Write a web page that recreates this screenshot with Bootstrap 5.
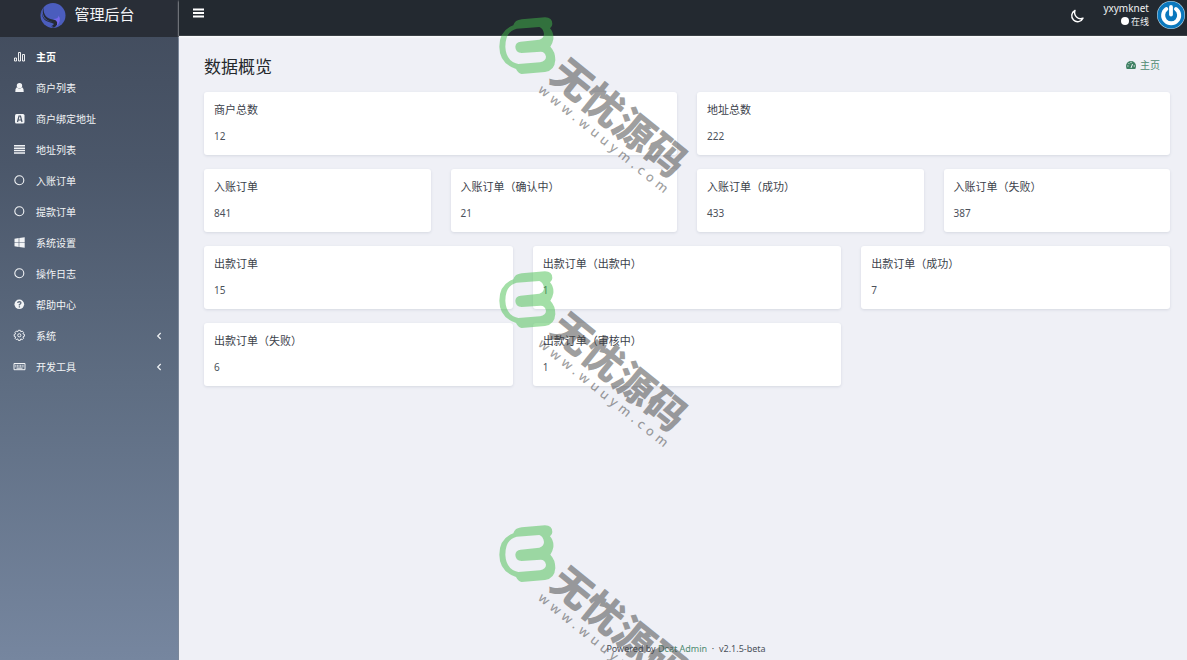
<!DOCTYPE html>
<html lang="zh-CN">
<head>
<meta charset="utf-8">
<meta name="viewport" content="width=device-width, initial-scale=1">
<title>管理后台</title>
<link href="https://cdn.jsdelivr.net/npm/bootstrap@5.3.0/dist/css/bootstrap.min.css" rel="stylesheet">
<style>
  body { font-family: "Noto Sans", "Noto Sans CJK SC", sans-serif; font-size: 10px; line-height: 16px; color: #4b515a; background: #eff0f6; }
  .side { width: 179px; background: linear-gradient(#414b5c, #4b576a 25%, #5e6d82 58%, #76869f); border-right: 1px solid #7b8799; }
  .brand { height: 37px; background: #292e37; color: #f4f5f7; font-size: 15px; line-height: 28px; margin-right: -1px; padding-right: 4px; }
  .brand svg { margin-top: 2px; }
  .menu { padding-top: 4px; }
  .menu a { height: 31px; padding: 0 16px 0 13px; gap: 10px; color: #f2f4f6; text-decoration: none; }
  .menu a.active { font-weight: 700; color: #fff; }
  .menu svg { width: 13px; height: 13px; flex: none; }
  .menu .arrow { width: 6px; height: 8px; }
  .topbar { height: 36px; background: #232930; color: #fff; box-shadow: 0 1px 2px #ffffff; border-bottom: 1px solid #3a4045; padding: 0 2px 6px 14px; }
  .topbar button { background: none; border: 0; padding: 0; color: #fff; line-height: 0; }
  .topbar .burger { padding-bottom: 4px; }
  .topbar .night { padding-top: 3px; margin-right: 14px; }
  .user { font-size: 10px; line-height: 13px; text-align: right; color: #f0f1f2; text-decoration: none; }
  .state { font-size: 9px; }
  .state i { width: 8px; height: 8px; background: #fff; margin-right: 2px; }
  .page-body { padding: 17px 17px 0 25px; }
  h1 { font-size: 17px; line-height: 27px; font-weight: 400; color: #24282c; margin: 0; }
  .crumb a, .foot a { color: #4e8a71; text-decoration: none; }
  .crumb { padding: 0 10px 4px 0; }
  .tiles { --bs-gutter-x: 20px; --bs-gutter-y: 14px; margin-top: -2px; }
  .tile { border: 0; border-radius: 3px; padding: 10px 10px 11px; box-shadow: 0 1px 3px rgba(50, 60, 90, .13); }
  .tile h2 { font-size: 11px; line-height: 16px; font-weight: 400; margin: 0 0 10px; color: #3c424b; }
  .tile p { margin: 0; }
  .foot { font-size: 9px; line-height: 14px; padding: 0 0 4px 6px; }
  .marks { inset: 0; overflow: hidden; pointer-events: none; z-index: 10; }
  .marks svg { width: 191px; height: 254px; flex: none; overflow: visible; }
  .m-name { font: 900 120px "Noto Sans CJK SC", sans-serif; }
  .m-site { font: 500 39px "Noto Sans", sans-serif; letter-spacing: 13px; }
</style>
</head>
<body>
<div class="d-flex min-vh-100 position-relative">
  <aside class="side flex-shrink-0">
    <div class="brand d-flex justify-content-center gap-2">
      <svg class="flex-shrink-0" width="26" height="26" viewBox="0 0 26 26"><circle cx="13" cy="13.500" r="12.500" fill="#4b5dbd"/><path d="M2.500 6C.5 13 4 18.500 11 19.500Q17 20 15.500 23Q14.500 24.500 11 24.500C17 21 12 21.500 9 20C3 18.500 .5 13 2.500 6Z" fill="#252a34"/><path d="M3.500 5C3 13 7 16.500 12.500 17.500C20 18.500 18.500 22 15 25Q14 25.500 12 25.500Q17 21 12.500 20C5 18.500 1 13 3.500 5Z" fill="#252a34"/><path d="M13 17Q18.500 17 18.500 13.500Q22.500 18.500 15.500 25.500Q20 19 13 17Z" fill="#7468ea"/></svg>
      <span>管理后台</span>
    </div>
    <nav class="menu d-flex flex-column">
      <a href="#" class="active d-flex align-items-center"><svg viewBox="0 0 13 13" fill="none" stroke="currentColor" stroke-width=".9"><path d="M1.500 11v-3h2v3zM5.500 11v-8.500h2V11zM9.500 11v-6.500h2V11z"/></svg>主页</a>
      <a href="#" class="d-flex align-items-center"><svg viewBox="0 0 13 13" fill="currentColor"><circle cx="6.500" cy="4.700" r="2.700"/><path d="M3.800 6.300Q6.500 9 9.200 6.300Q11 7.500 10.700 11H2.300Q2 7.500 3.800 6.300Z"/></svg>商户列表</a>
      <a href="#" class="d-flex align-items-center"><svg viewBox="0 0 13 13"><rect x="2" y="2" width="9.500" height="9.500" rx="1.500" fill="currentColor"/><path d="M4.500 10L6 4h1.500L9 10M5 8h3.500" fill="none" stroke="#4a5567" stroke-width="1.200"/></svg>商户绑定地址</a>
      <a href="#" class="d-flex align-items-center"><svg viewBox="0 0 13 13" stroke="currentColor" stroke-width="1.500"><path d="M1 2.800h11M1 5.200h11M1 7.600h11M1 10h11"/></svg>地址列表</a>
      <a href="#" class="d-flex align-items-center"><svg viewBox="0 0 13 13" fill="none" stroke="currentColor" stroke-width="1.100"><circle cx="6.300" cy="6.300" r="4.500"/></svg>入账订单</a>
      <a href="#" class="d-flex align-items-center"><svg viewBox="0 0 13 13" fill="none" stroke="currentColor" stroke-width="1.100"><circle cx="6.300" cy="6.300" r="4.500"/></svg>提款订单</a>
      <a href="#" class="d-flex align-items-center"><svg viewBox="0 0 13 13" fill="currentColor"><path d="M1.500 2.700L5.700 2.100V6.200H1.500ZM6.300 2L11.700 1.300V6.200H6.300ZM1.500 6.800H5.700V10.900L1.500 10.300ZM6.300 6.800H11.700V11.700L6.300 11Z"/></svg>系统设置</a>
      <a href="#" class="d-flex align-items-center"><svg viewBox="0 0 13 13" fill="none" stroke="currentColor" stroke-width="1.100"><circle cx="6.300" cy="6.300" r="4.500"/></svg>操作日志</a>
      <a href="#" class="d-flex align-items-center"><svg viewBox="0 0 13 13"><circle cx="6.300" cy="6.300" r="4.800" fill="currentColor"/><path d="M4.700 5Q4.800 3.600 6.300 3.600Q8 3.700 7.900 5Q7.800 5.900 6.400 6.500V7.500M6.400 8.200V9.400" fill="none" stroke="#5a687b" stroke-width="1.300"/></svg>帮助中心</a>
      <a href="#" class="d-flex align-items-center"><svg viewBox="0 0 13 13" fill="none" stroke="currentColor"><path d="M5.300 1.300h2l.5 1.400 1.500-.6 1.300 1.400-.7 1.300 1.500.6v1.900l-1.500.6.7 1.400-1.300 1.300-1.500-.7-.5 1.500h-2l-.5-1.500-1.500.7L2 9.300l.7-1.400-1.500-.6V5.400l1.500-.6L2 3.500l1.300-1.400 1.500.6z"/><circle cx="6.300" cy="6.300" r="1.600"/></svg>系统<svg class="arrow ms-auto" viewBox="0 0 6 8" fill="none" stroke="currentColor" stroke-width="1.200"><path d="M4.700 1L1.700 4L4.700 7"/></svg></a>
      <a href="#" class="d-flex align-items-center"><svg viewBox="0 0 13 13" fill="none" stroke="currentColor"><path d="M1 3.500h11v6.200H1z"/><path d="M2.300 5.300h8.500M2.300 6.800h8.500" stroke-dasharray="1 .6"/><path d="M3.500 8.200h6"/></svg>开发工具<svg class="arrow ms-auto" viewBox="0 0 6 8" fill="none" stroke="currentColor" stroke-width="1.200"><path d="M4.700 1L1.700 4L4.700 7"/></svg></a>
    </nav>
  </aside>

  <div class="flex-grow-1 d-flex flex-column">
    <header class="topbar d-flex align-items-center">
      <button type="button" class="burger" aria-label="菜单"><svg width="11" height="10" viewBox="0 0 11 10" stroke="currentColor" stroke-width="1.800"><path d="M0 1.500h11M0 5h11M0 8.500h11"/></svg></button>
      <button type="button" class="night ms-auto" aria-label="深色模式"><svg width="16" height="16" viewBox="0 0 16 16" fill="none" stroke="currentColor" stroke-width="1.400" stroke-linejoin="round"><path d="M6 2.500A5.900 5.900 0 1 0 14 10.200A6.100 6.100 0 0 1 6 2.500Z"/></svg></button>
      <a href="#" class="user d-flex align-items-center gap-2">
        <span class="ps-1"><span class="d-block">yxymknet</span><span class="state d-flex align-items-center justify-content-end"><i class="rounded-circle"></i>在线</span></span>
        <svg width="28" height="28" viewBox="0 0 28 28"><circle cx="14" cy="14" r="14" fill="#c4dcea"/><circle cx="14" cy="14" r="13.500" fill="#0b78bd"/><path d="M9.300 8A8 8 0 1 0 19 8" fill="none" stroke="#fff" stroke-width="4" stroke-linecap="round"/><path d="M14 6V13.500" stroke="#fff" stroke-width="3.800" stroke-linecap="round"/></svg>
      </a>
    </header>

    <main class="page-body flex-grow-1">
      <div class="d-flex align-items-center justify-content-between">
        <h1>数据概览</h1>
        <nav class="crumb"><a href="#" class="d-flex align-items-center gap-1"><svg width="10" height="10" viewBox="0 0 10 10"><path d="M0 6A5 5 0 0 1 10 6Q10 7.500 9.300 9H.7Q0 7.500 0 6Z" fill="#3f8163"/><path d="M1.300 6h1.200M2.600 3.200l.9.900M5 1.800v1.300M7.700 6h1.200M5 8L6.500 4" stroke="#eff0f6" stroke-width="1"/></svg>主页</a></nav>
      </div>
      <div class="row tiles">
        <div class="col-6"><div class="card tile"><h2>商户总数</h2><p>12</p></div></div>
        <div class="col-6"><div class="card tile"><h2>地址总数</h2><p>222</p></div></div>
        <div class="col-3"><div class="card tile"><h2>入账订单</h2><p>841</p></div></div>
        <div class="col-3"><div class="card tile"><h2>入账订单（确认中）</h2><p>21</p></div></div>
        <div class="col-3"><div class="card tile"><h2>入账订单（成功）</h2><p>433</p></div></div>
        <div class="col-3"><div class="card tile"><h2>入账订单（失败）</h2><p>387</p></div></div>
        <div class="col-4"><div class="card tile"><h2>出款订单</h2><p>15</p></div></div>
        <div class="col-4"><div class="card tile"><h2>出款订单（出款中）</h2><p>1</p></div></div>
        <div class="col-4"><div class="card tile"><h2>出款订单（成功）</h2><p>7</p></div></div>
        <div class="col-4"><div class="card tile"><h2>出款订单（失败）</h2><p>6</p></div></div>
        <div class="col-4"><div class="card tile"><h2>出款订单（审核中）</h2><p>1</p></div></div>
      </div>
    </main>
    <footer class="foot text-center">Powered by <a href="#">Dcat Admin</a> &nbsp;·&nbsp; v2.1.5-beta</footer>
  </div>

  <div class="marks position-absolute d-flex flex-column align-items-center">
    <svg viewBox="24 0 573 762"><path fill="#44be4b" fill-opacity=".49" fill-rule="evenodd" d="M70 76Q74 60 95 58L165 52Q187 52 187 72Q187 80 180 85Q192 98 190 118Q188 130 181 140Q196 155 196 180Q194 212 165 216L95 222Q85 220 78 207Q28 190 28 140Q28 92 70 76ZM80 86Q46 94 46 140Q48 184 85 192L150 187Q168 183 168 170Q165 155 152 155L95 159Q76 157 76 140Q77 126 92 125L148 119Q162 114 162 102Q160 86 148 81Z"/><g fill="#404040" fill-opacity=".5"><text class="m-name" transform="translate(173 236) rotate(39)">无忧源码</text><text class="m-site" transform="translate(142 274) rotate(39)">www.wuuym.com</text></g></svg>
    <svg viewBox="24 0 573 762"><path fill="#44be4b" fill-opacity=".49" fill-rule="evenodd" d="M70 76Q74 60 95 58L165 52Q187 52 187 72Q187 80 180 85Q192 98 190 118Q188 130 181 140Q196 155 196 180Q194 212 165 216L95 222Q85 220 78 207Q28 190 28 140Q28 92 70 76ZM80 86Q46 94 46 140Q48 184 85 192L150 187Q168 183 168 170Q165 155 152 155L95 159Q76 157 76 140Q77 126 92 125L148 119Q162 114 162 102Q160 86 148 81Z"/><g fill="#404040" fill-opacity=".5"><text class="m-name" transform="translate(173 236) rotate(39)">无忧源码</text><text class="m-site" transform="translate(142 274) rotate(39)">www.wuuym.com</text></g></svg>
    <svg viewBox="24 0 573 762"><path fill="#44be4b" fill-opacity=".49" fill-rule="evenodd" d="M70 76Q74 60 95 58L165 52Q187 52 187 72Q187 80 180 85Q192 98 190 118Q188 130 181 140Q196 155 196 180Q194 212 165 216L95 222Q85 220 78 207Q28 190 28 140Q28 92 70 76ZM80 86Q46 94 46 140Q48 184 85 192L150 187Q168 183 168 170Q165 155 152 155L95 159Q76 157 76 140Q77 126 92 125L148 119Q162 114 162 102Q160 86 148 81Z"/><g fill="#404040" fill-opacity=".5"><text class="m-name" transform="translate(173 236) rotate(39)">无忧源码</text><text class="m-site" transform="translate(142 274) rotate(39)">www.wuuym.com</text></g></svg>
  </div>
</div>
<script src="https://cdn.jsdelivr.net/npm/bootstrap@5.3.0/dist/js/bootstrap.bundle.min.js"></script>
</body>
</html>
